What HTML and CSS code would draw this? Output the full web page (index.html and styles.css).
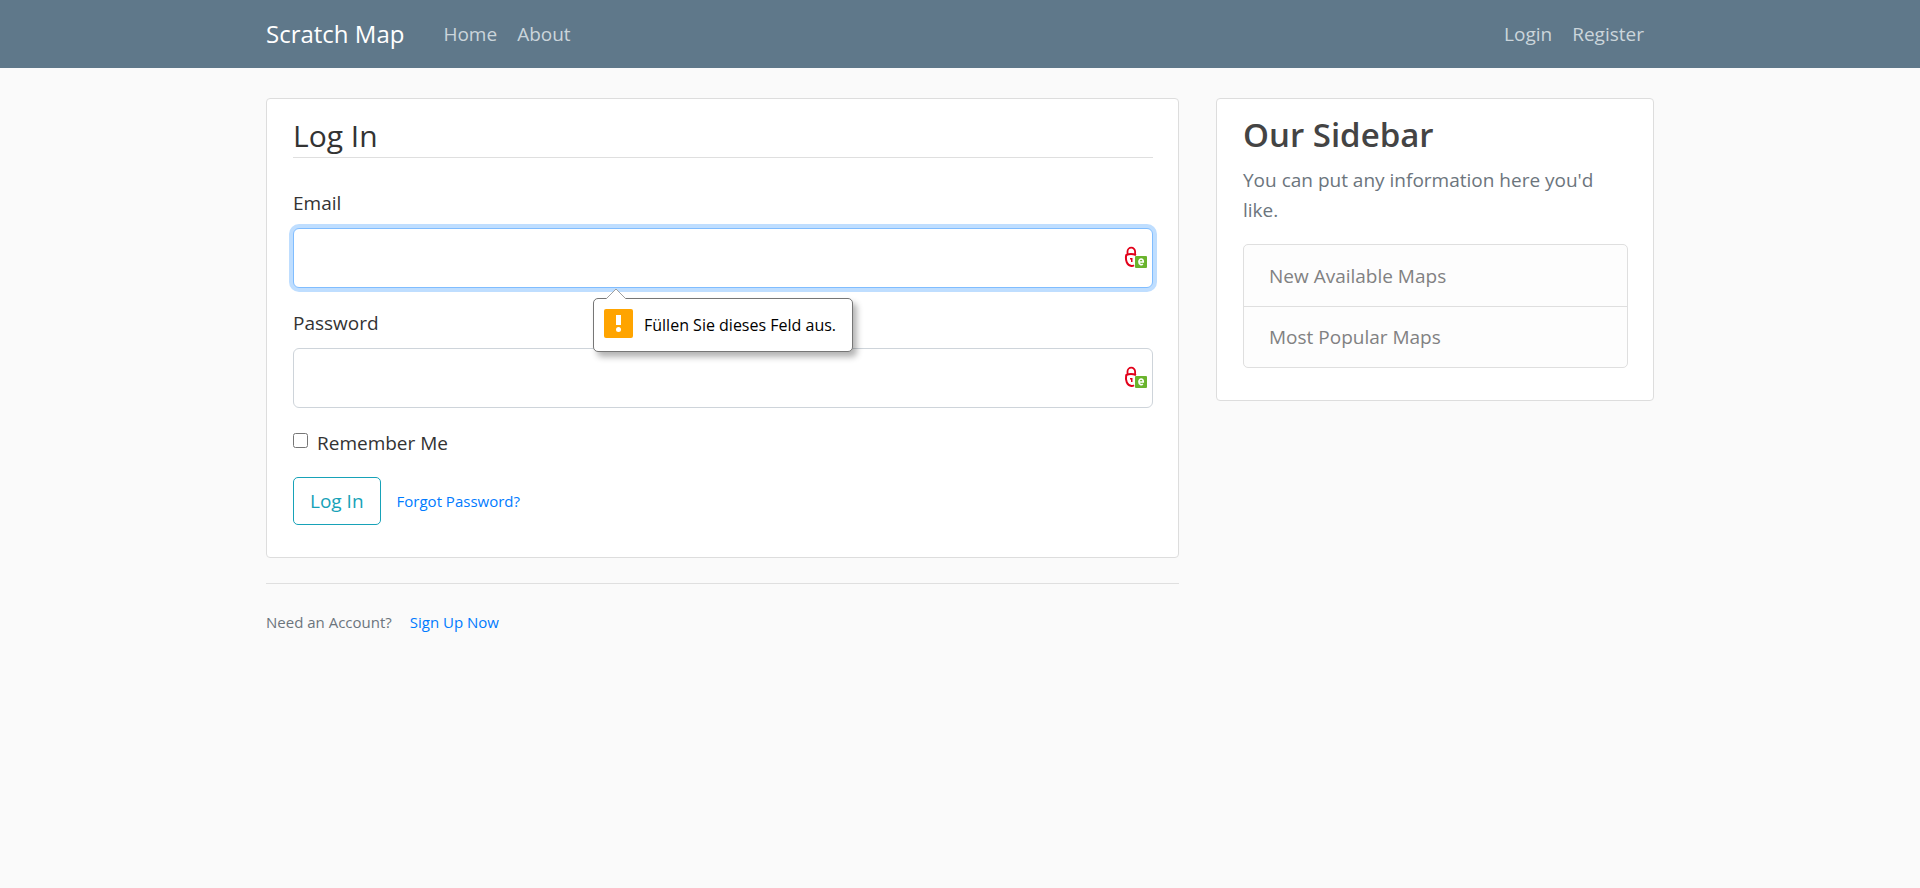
FILE: index.html
```html
<!DOCTYPE html>
<html lang="en">
<head>
<meta charset="utf-8">
<meta name="viewport" content="width=device-width, initial-scale=1">
<title>Scratch Map - Log In</title>
<link rel="stylesheet" href="styles.css">
</head>
<body>
<header class="navbar">
  <nav class="container navbar-inner">
    <a class="brand" href="#">Scratch Map</a>
    <div class="nav-group">
      <a class="nav-link" href="#">Home</a>
      <a class="nav-link" href="#">About</a>
    </div>
    <div class="nav-group nav-right">
      <a class="nav-link" href="#">Login</a>
      <a class="nav-link" href="#">Register</a>
    </div>
  </nav>
</header>
<main class="container layout">
  <div class="main-column">
    <section class="card">
      <form>
        <h1 class="legend">Log In</h1>
        <div class="field">
          <label for="email">Email</label>
          <div class="control">
            <input class="text-input focused" id="email" type="email">
            <svg class="lock" viewBox="0 0 24 24" aria-hidden="true">
              <path d="M3.500 8V5.500a3.800 3.800 0 0 1 7.600 0V8" fill="none" stroke="#e2001a" stroke-width="1.800"/>
              <path d="M12 9.200C9 7.700 5 7.700 2.200 9.200 1.200 14.500 3 19.500 7.500 20q1.500 0 2.500-.8" fill="none" stroke="#e2001a" stroke-width="2"/>
              <path d="M6 12h2.500v4H7v-2.500H6z" fill="#e2001a"/>
              <rect x="11" y="10" width="12" height="12" rx="1" fill="#6ab42d"/>
              <path d="M15 16h4.300c.2-3.900-4.400-3.900-4.400-.2 0 3.200 2.700 3.400 4 2.400" fill="none" stroke="#fff" stroke-width="1.600"/>
            </svg>
            <div class="tooltip" role="alert">
              <svg class="tip-arrow" viewBox="0 0 20 11" aria-hidden="true"><path d="M0 11L10 1l10 10" fill="#fff" stroke="#a0a0a0"/></svg>
              <svg class="warning" viewBox="0 0 29 29" aria-hidden="true">
                <rect width="29" height="29" rx="2" fill="#ffa400"/>
                <path d="M12 6h5v10h-5z" fill="#fff"/><circle cx="14.500" cy="20.500" r="2.500" fill="#fff"/>
              </svg>
              <span>Füllen Sie dieses Feld aus.</span>
            </div>
          </div>
        </div>
        <div class="field">
          <label for="password">Password</label>
          <div class="control">
            <input class="text-input" id="password" type="password">
            <svg class="lock" viewBox="0 0 24 24" aria-hidden="true">
              <path d="M3.500 8V5.500a3.800 3.800 0 0 1 7.600 0V8" fill="none" stroke="#e2001a" stroke-width="1.800"/>
              <path d="M12 9.200C9 7.700 5 7.700 2.200 9.200 1.200 14.500 3 19.500 7.500 20q1.500 0 2.500-.8" fill="none" stroke="#e2001a" stroke-width="2"/>
              <path d="M6 12h2.500v4H7v-2.500H6z" fill="#e2001a"/>
              <rect x="11" y="10" width="12" height="12" rx="1" fill="#6ab42d"/>
              <path d="M15 16h4.300c.2-3.900-4.400-3.900-4.400-.2 0 3.200 2.700 3.400 4 2.400" fill="none" stroke="#fff" stroke-width="1.600"/>
            </svg>
          </div>
        </div>
        <div class="check">
          <input class="checkbox" id="remember" type="checkbox">
          <label for="remember">Remember Me</label>
        </div>
        <div class="actions">
          <button class="button" type="submit">Log In</button>
          <a class="small link" href="#">Forgot Password?</a>
        </div>
      </form>
    </section>
    <footer class="signup small">
      <span>Need an Account?</span>
      <a class="link" href="#">Sign Up Now</a>
    </footer>
  </div>
  <aside class="card sidebar">
    <h2 class="sidebar-title">Our Sidebar</h2>
    <p class="sidebar-text">You can put any information here you'd like.</p>
    <ul class="list">
      <li>New Available Maps</li>
      <li>Most Popular Maps</li>
    </ul>
  </aside>
</main>
</body>
</html>
```
FILE: styles.css
```css
* { box-sizing: border-box; }
body {
  margin: 0;
  background: #fafafa;
  color: #333;
  font-family: "Open Sans", "Noto Sans", sans-serif;
  font-size: 19px;
  line-height: 30px;
}
a { text-decoration: none; }
.container { max-width: 1426px; margin: 0 auto; padding: 0 19px; }
.navbar { background: #5f788a; }
.navbar-inner { display: flex; align-items: center; height: 68px; }
.brand { color: #fff; font-size: 24px; margin-right: 39px; }
.nav-group { display: flex; gap: 20px; }
.nav-right { margin-left: auto; padding-right: 10px; }
.nav-link { color: #cbd5db; }
.layout {
  display: grid;
  grid-template-columns: minmax(0, 913fr) minmax(0, 438fr);
  gap: 37px;
  align-items: start;
  padding-top: 30px;
}
.card { background: #fff; border: 1px solid #ddd; border-radius: 4px; }
.main-column > .card { padding: 18px 25px 32px 26px; }
.legend {
  margin: 0 0 30px;
  padding-bottom: 2px;
  border-bottom: 1px solid #dfdfdf;
  font-size: 30px;
  font-weight: 400;
  line-height: 38px;
}
.field { margin-bottom: 20px; }
.field label { display: block; margin-bottom: 10px; }
.control { position: relative; }
.text-input {
  display: block;
  width: 100%;
  height: 60px;
  padding: 10px 48px 10px 20px;
  border: 1px solid #ced4da;
  border-radius: 6px;
  background: #fff;
  font: inherit;
  outline: 0;
}
.focused { border-color: #80bdff; box-shadow: 0 0 0 4px #bfdeff; }
.lock { position: absolute; right: 5px; top: 18px; width: 24px; height: 24px; }
.tooltip {
  position: absolute;
  z-index: 1;
  left: 300px;
  top: 70px;
  display: flex;
  align-items: center;
  gap: 11px;
  height: 54px;
  padding: 0 16px 0 10px;
  border: 1px solid #767676;
  border-radius: 5px;
  background: #fff;
  box-shadow: 4px 5px 6px rgba(0, 0, 0, .3);
  color: #000;
  font-size: 16px;
  white-space: nowrap;
}
.tip-arrow { position: absolute; left: 12px; top: -11px; width: 20px; height: 11px; }
.warning { width: 29px; height: 29px; margin-bottom: 4px; }
.check { display: flex; align-items: flex-start; gap: 9px; }
.checkbox { width: 15px; height: 15px; margin: 5px 0 0; }
.actions { display: flex; align-items: center; gap: 16px; margin-top: 19px; }
.button {
  height: 48px;
  padding: 0 16px;
  border: 1px solid #17a2b8;
  border-radius: 5px;
  background: transparent;
  color: #17a2b8;
  font: inherit;
}
.small { font-size: 15px; }
.link { color: #007bff; }
.signup {
  display: flex;
  gap: 18px;
  margin-top: 25px;
  padding-top: 23px;
  border-top: 1px solid #dfdfdf;
  color: #6c757d;
}
.sidebar { padding: 15px 25px 32px 26px; }
.sidebar-title { margin: 0 0 9px; color: #444; font-size: 33px; font-weight: 600; line-height: 42px; }
.sidebar-text { margin: 0 0 19px; color: #6c757d; }
.list {
  margin: 0;
  padding: 0;
  border: 1px solid #dfdfdf;
  border-radius: 5px;
  background: #fdfdfd;
  color: #818182;
  list-style: none;
}
.list li { padding: 16px 25px 15px; }
.list li + li { padding-top: 15px; border-top: 1px solid #dfdfdf; }
```
